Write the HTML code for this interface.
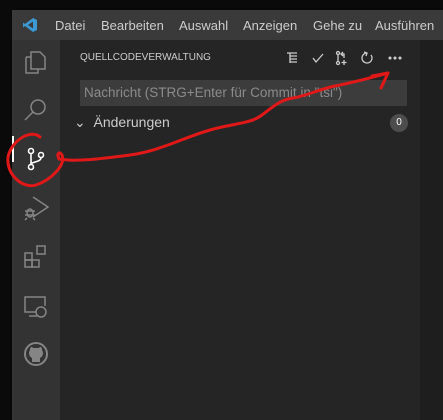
<!DOCTYPE html>
<html><head><style>
body{margin:0;width:443px;height:420px;background:#0a0a0a;position:relative;overflow:hidden;font-family:"Liberation Sans",sans-serif}
.t{position:absolute;left:12px;top:10px;width:431px;height:30px;background:#3a3a3a}
.t span{position:absolute;top:8px;font-size:13px;color:#cccccc}
.ab{position:absolute;left:12px;top:40px;width:48px;height:380px;background:#333333}
.sb{position:absolute;left:60px;top:40px;width:360px;height:380px;background:#252526}
.ed{position:absolute;left:420px;top:40px;width:23px;height:380px;background:#1e1e1e}
.ic{position:absolute;stroke:#858585;fill:none;stroke-width:1.5}
</style></head><body>
<div class="t">
<svg style="position:absolute;left:10px;top:7px" width="16" height="16" viewBox="0 0 16 16"><path d="M11 1 L15 3 V13 L11 15 L3 9 L1 10.5 V5.5 L3 7 Z M11 4.5 L6 8 L11 11.5Z" fill="#3c99d4" fill-rule="evenodd"/></svg>
<span style="left:43px">Datei</span><span style="left:89px">Bearbeiten</span><span style="left:167px">Auswahl</span><span style="left:231px">Anzeigen</span><span style="left:301px">Gehe zu</span><span style="left:363px">Ausführen</span>
</div>
<div class="ab"></div>
<div class="sb"></div>
<div class="ed"></div>
<div style="position:absolute;left:12px;top:136px;width:2px;height:26px;background:#fff"></div>
<svg class="ic" style="left:22px;top:48px" width="28" height="28" viewBox="0 0 28 28"><path d="M9 4h9l5 5v12H9z M4 9h5 M4 9v16h12v-4"/></svg>
<svg class="ic" style="left:22px;top:96px" width="28" height="28" viewBox="0 0 28 28"><circle cx="16" cy="11" r="7"/><path d="M11 16 L3 24"/></svg>
<svg style="position:absolute;left:22px;top:146px;fill:none;stroke:#fff;stroke-width:1.6" width="28" height="28" viewBox="0 0 28 28"><circle cx="9" cy="5" r="2.5"/><circle cx="19" cy="9" r="2.5"/><circle cx="9" cy="21" r="2.5"/><path d="M9 7.5v11 M19 11.5c0 5-10 4-10 7"/></svg>
<svg class="ic" style="left:22px;top:194px" width="28" height="28" viewBox="0 0 28 28"><path d="M11 3 L26 13 L11 23"/><ellipse cx="8" cy="19" rx="3" ry="4"/><path d="M3 17h10 M3 21h10 M5 24l-2 2 M11 24l2 2"/></svg>
<svg class="ic" style="left:22px;top:243px" width="28" height="28" viewBox="0 0 28 28"><rect x="3" y="10" width="7" height="7"/><rect x="3" y="17" width="7" height="7"/><rect x="10" y="17" width="7" height="7"/><rect x="15" y="3" width="8" height="8"/></svg>
<svg class="ic" style="left:22px;top:293px" width="28" height="28" viewBox="0 0 28 28"><path d="M14 19H3V4h20v9 M7 23h8"/><circle cx="19" cy="19" r="5"/></svg>
<svg style="position:absolute;left:22px;top:340px" width="28" height="28" viewBox="0 0 28 28"><circle cx="14" cy="14" r="11" fill="none" stroke="#858585" stroke-width="2"/><path d="M10 22v-4c-2-1-3-3-3-5 0-1 1-3 1-3 0-1 0-2 1-3 1 0 2 1 3 1h4c1 0 2-1 3-1 1 1 1 2 1 3 0 0 1 2 1 3 0 2-1 4-3 5v4z" fill="#858585"/></svg>
<div style="position:absolute;left:80px;top:52px;font-size:10px;color:#cccccc">QUELLCODEVERWALTUNG</div>
<svg style="position:absolute;left:284px;top:50px;fill:none;stroke:#ccc;stroke-width:1.3" width="120" height="16" viewBox="0 0 120 16"><path d="M3 3h10 M6 6h7 M6 9h7 M6 12h7 M6 3v10"/><path d="M29 8l3 4 7-8"/><circle cx="54" cy="3" r="1.5"/><circle cx="54" cy="13" r="1.5"/><path d="M54 5v6 M59 2l-2 2 2 2 M57 4h3v4 M60 10v5 M57.5 12.5h5"/><path d="M83 3a5 5 0 1 0 4 2 M80 2l3 1-1 3"/><circle cx="106" cy="8" r=".9" fill="#ccc"/><circle cx="111" cy="8" r=".9" fill="#ccc"/><circle cx="116" cy="8" r=".9" fill="#ccc"/></svg>
<div style="position:absolute;left:80px;top:80px;width:327px;height:26px;background:#3c3c3c;color:#8b8b8b;font-size:13.5px;line-height:26px;padding-left:4px;box-sizing:border-box">Nachricht (STRG+Enter für Commit in "tsi")</div>
<div style="position:absolute;left:74px;top:114px;font-size:14px;color:#cccccc">⌄&nbsp; Änderungen</div>
<div style="position:absolute;left:390px;top:114px;width:18px;height:18px;border-radius:9px;background:#4d4d4d;color:#fff;font-size:10px;text-align:center;line-height:18px">0</div>
<svg style="position:absolute;left:0;top:0" width="443" height="420" viewBox="0 0 443 420" fill="none" stroke="#e01818" stroke-width="3" stroke-linecap="round" stroke-linejoin="round"><path d="M40 137c-8-8-28 2-32 20-2 18 15 32 28 28 15-5 30-20 26-30-2-4-6-2-3 4"/><path d="M59 159 C75 162 100 159 130 155 S185 137 210 130 S250 124 262 115 S280 100 293 98 S320 89 335 86 S370 78 388 73"/><path d="M372 76 L388 73 L381 88"/></svg>
</body></html>
